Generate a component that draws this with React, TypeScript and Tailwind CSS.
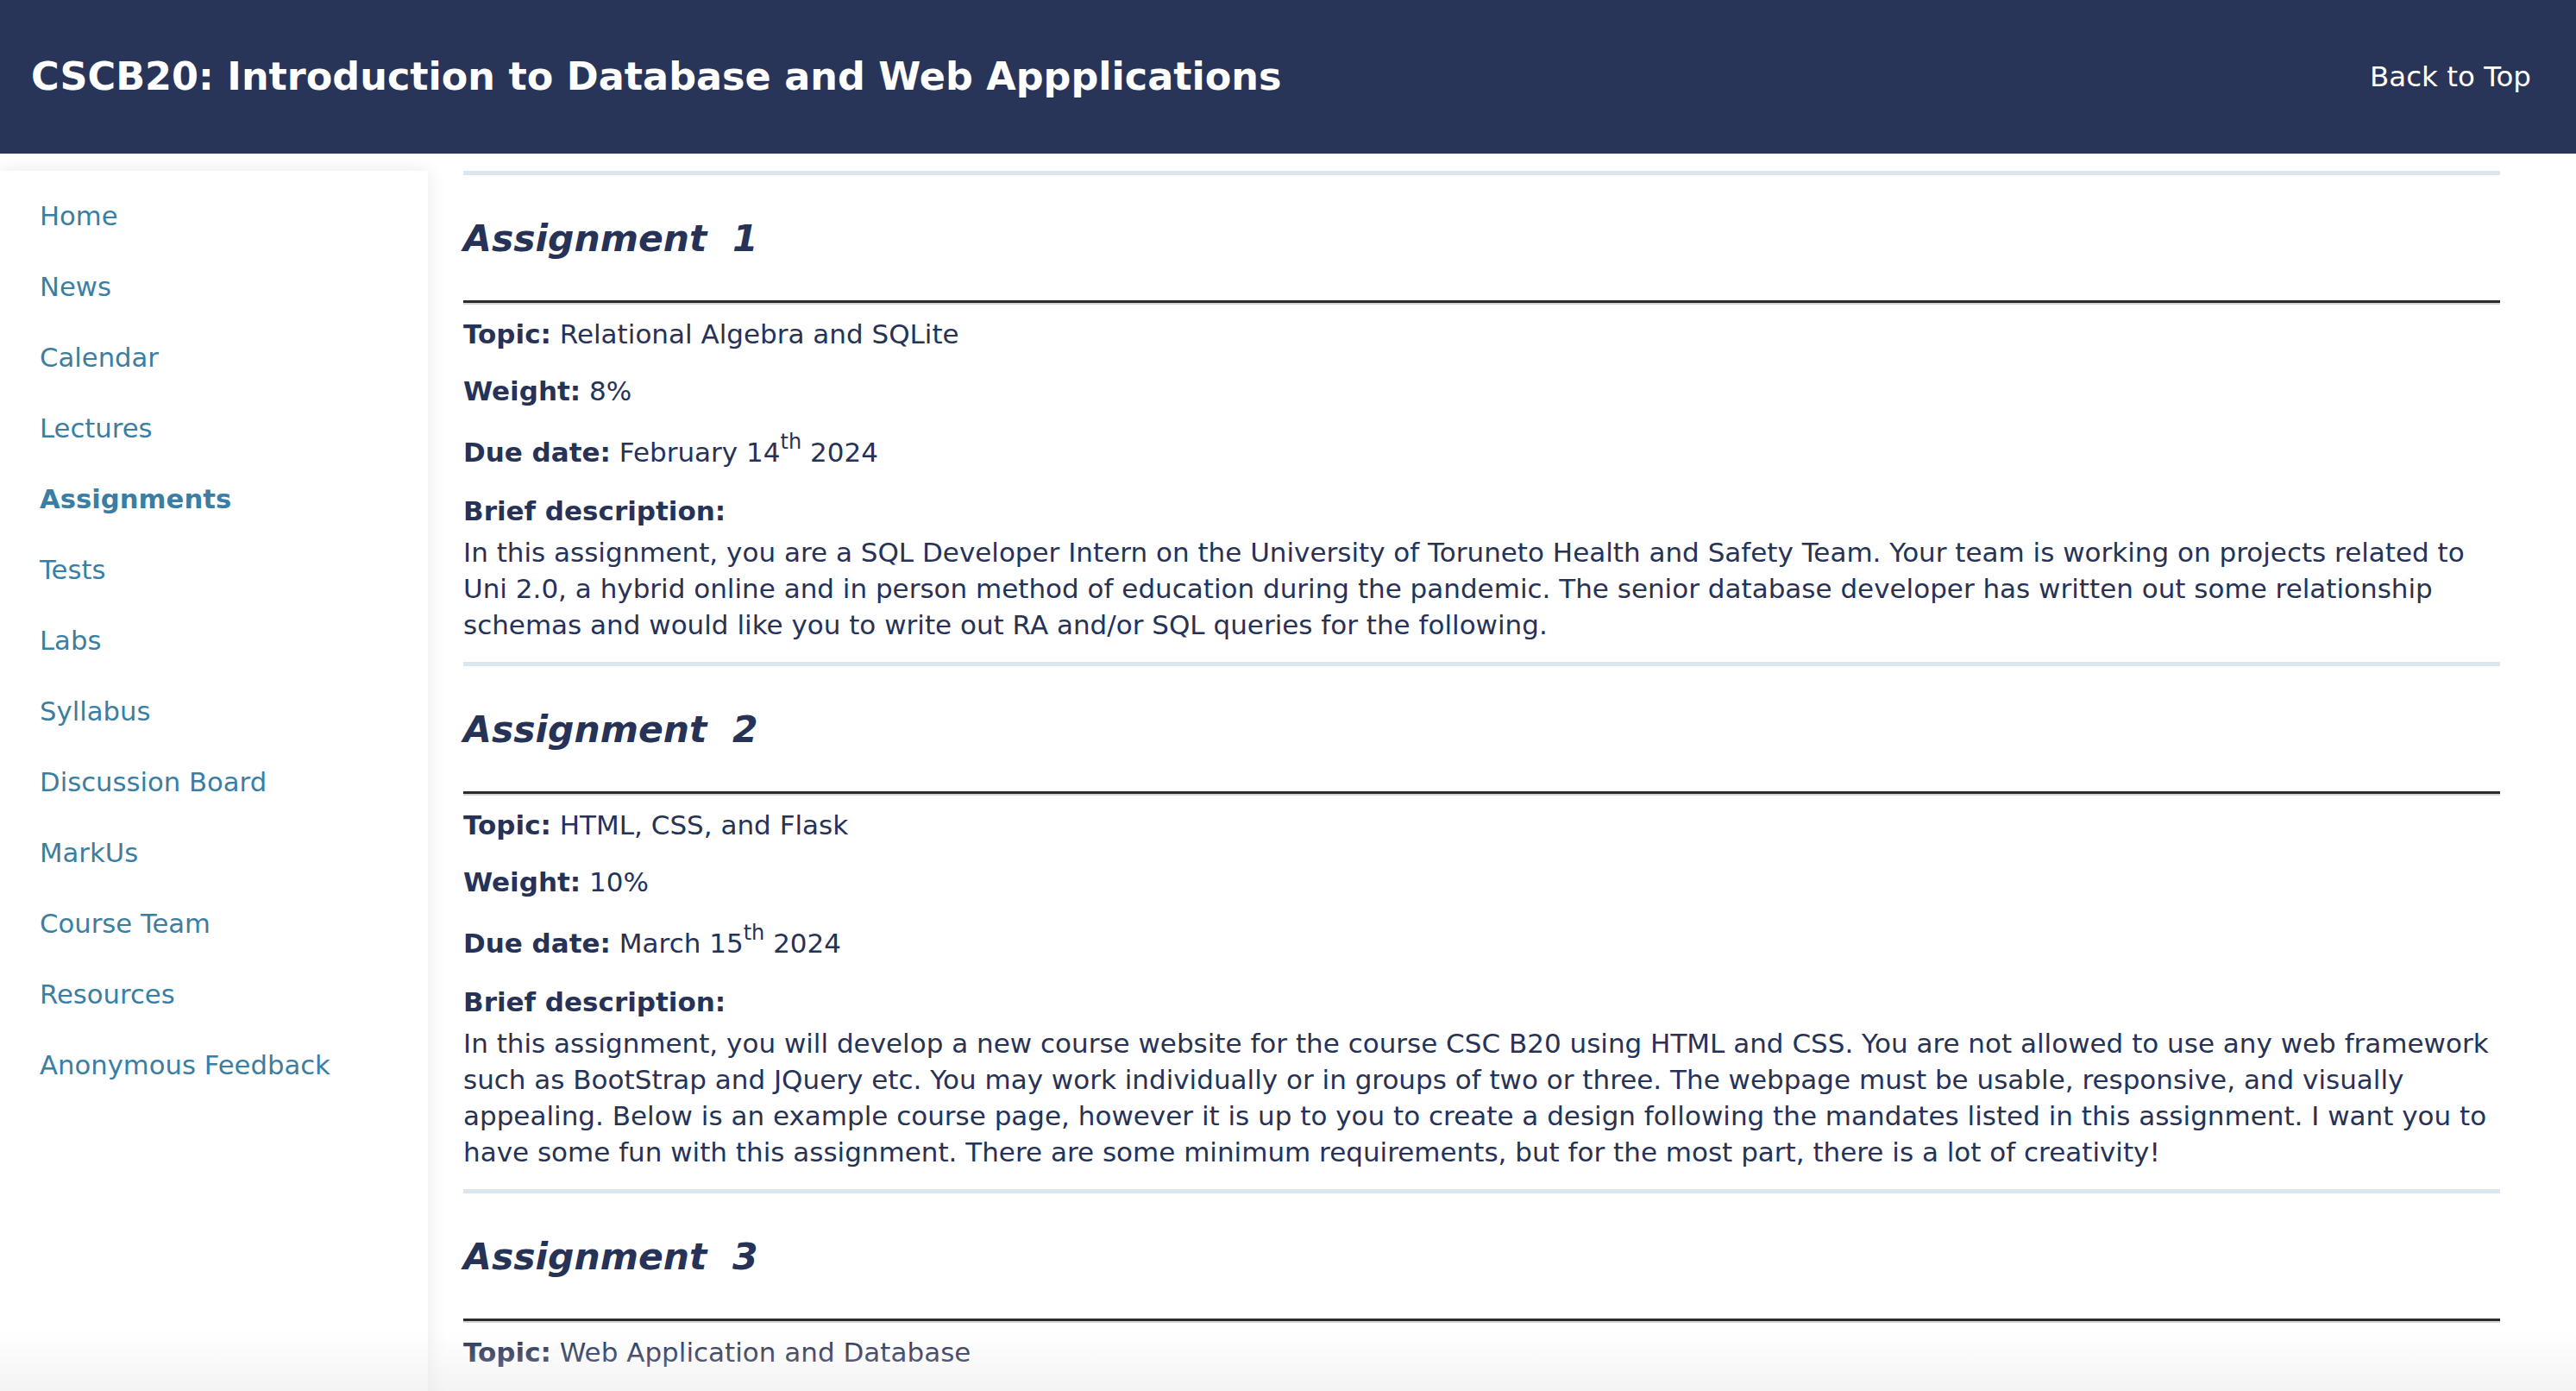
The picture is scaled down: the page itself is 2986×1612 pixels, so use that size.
import React from "react";

type Assignment = {
  title: string;
  topic: string;
  weight: string;
  dueMonth: string;
  dueDay: string;
  dueYear: string;
  description: string;
};

const NAV_ITEMS = [
  "Home",
  "News",
  "Calendar",
  "Lectures",
  "Assignments",
  "Tests",
  "Labs",
  "Syllabus",
  "Discussion Board",
  "MarkUs",
  "Course Team",
  "Resources",
  "Anonymous Feedback",
];

const ASSIGNMENTS: Assignment[] = [
  {
    title: "Assignment 1",
    topic: "Relational Algebra and SQLite",
    weight: "8%",
    dueMonth: "February",
    dueDay: "14",
    dueYear: "2024",
    description:
      "In this assignment, you are a SQL Developer Intern on the University of Toruneto Health and Safety Team. Your team is working on projects related to Uni 2.0, a hybrid online and in person method of education during the pandemic. The senior database developer has written out some relationship schemas and would like you to write out RA and/or SQL queries for the following.",
  },
  {
    title: "Assignment 2",
    topic: "HTML, CSS, and Flask",
    weight: "10%",
    dueMonth: "March",
    dueDay: "15",
    dueYear: "2024",
    description:
      "In this assignment, you will develop a new course website for the course CSC B20 using HTML and CSS. You are not allowed to use any web framework such as BootStrap and JQuery etc. You may work individually or in groups of two or three. The webpage must be usable, responsive, and visually appealing. Below is an example course page, however it is up to you to create a design following the mandates listed in this assignment. I want you to have some fun with this assignment. There are some minimum requirements, but for the most part, there is a lot of creativity!",
  },
  {
    title: "Assignment 3",
    topic: "Web Application and Database",
    weight: "12%",
    dueMonth: "April",
    dueDay: "5",
    dueYear: "2024",
    description: "",
  },
];

const AssignmentBlock = ({ data }: { data: Assignment }) => {
  const [word, num] = data.title.split(" ");
  return (
    <section>
      <div className="h-[5px] bg-[#dce6ee]"></div>
      <h2 className="mt-[47px] text-[42.5px] leading-[53px] font-bold italic">
        {word}&nbsp; {num}
      </h2>
      <div className="mt-[45px] border-t-[3px] border-b-[2px] border-t-[#2b2b2b] border-b-[#d4d4d4]"></div>
      <p className="mt-[13px]">
        <span className="font-bold">Topic:</span> {data.topic}
      </p>
      <p className="mt-[24px]">
        <span className="font-bold">Weight:</span> {data.weight}
      </p>
      <p className="mt-[29px]">
        <span className="font-bold">Due date:</span> {data.dueMonth} {data.dueDay}
        <sup className="text-[24px] leading-none top-[-15px]">th</sup> {data.dueYear}
      </p>
      <p className="mt-[26px] font-bold">Brief description:</p>
      <p className="mt-[6px]">{data.description}</p>
      <div className="h-[22px]"></div>
    </section>
  );
};

export default function App() {
  return (
    <div
      className="relative h-[1612px] w-full overflow-hidden bg-white text-[#263256]"
      style={{ fontFamily: '"DejaVu Sans", Verdana, sans-serif' }}
    >
      <header className="h-[178px] bg-[#293558] flex items-center justify-between pl-[36px] pr-[52px] text-white">
        <h1 className="text-[44.5px] font-bold leading-none">
          CSCB20: Introduction to Database and Web Appplications
        </h1>
        <a className="text-[32.5px] leading-none">Back to Top</a>
      </header>

      <div className="flex">
        <aside className="mt-[20px] w-[496px] shrink-0 h-[1500px] bg-white shadow-[0_0_22px_rgba(0,0,0,0.09)] pt-[12px] relative z-10">
          <nav className="flex flex-col">
            {NAV_ITEMS.map((item) => (
              <a
                key={item}
                className={
                  "h-[82px] flex items-center pl-[46px] text-[30.7px] leading-[42px] text-[#3a7fa3] " +
                  (item === "Assignments" ? "font-bold" : "")
                }
              >
                {item}
              </a>
            ))}
          </nav>
        </aside>

        <main className="flex-1 pt-[20px] pl-[41px] pr-[88px] text-[31px] leading-[42px]">
          {ASSIGNMENTS.map((a) => (
            <AssignmentBlock key={a.title} data={a} />
          ))}
        </main>
      </div>

      {/* window shade at the bottom edge */}
      <div className="pointer-events-none absolute inset-x-0 bottom-0 z-20 h-[70px] bg-gradient-to-b from-transparent to-[#e6e6e6]/45"></div>
    </div>
  );
}
